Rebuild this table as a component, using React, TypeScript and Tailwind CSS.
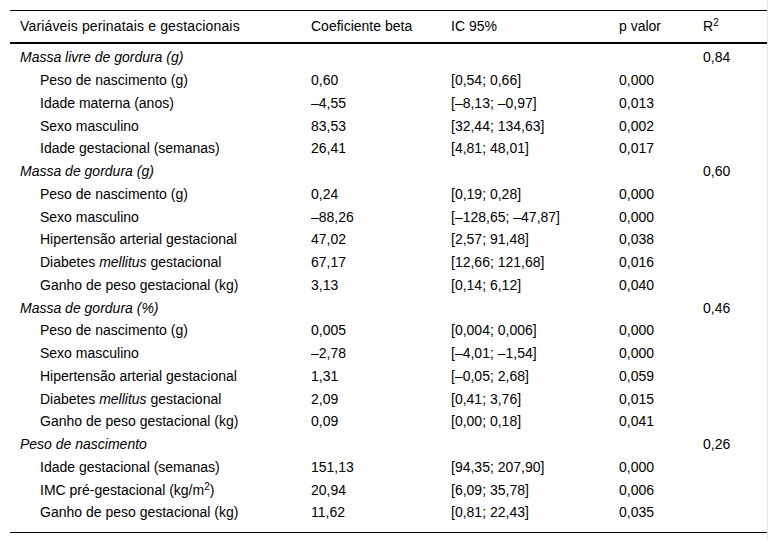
type Row = {
  label: React.ReactNode;
  beta?: string;
  ic?: string;
  p?: string;
  r2?: string;
  group?: boolean;
};

const rows: Row[] = [
  { label: "Massa livre de gordura (g)", group: true, r2: "0,84" },
  { label: "Peso de nascimento (g)", beta: "0,60", ic: "[0,54; 0,66]", p: "0,000" },
  { label: "Idade materna (anos)", beta: "–4,55", ic: "[–8,13; –0,97]", p: "0,013" },
  { label: "Sexo masculino", beta: "83,53", ic: "[32,44; 134,63]", p: "0,002" },
  { label: "Idade gestacional (semanas)", beta: "26,41", ic: "[4,81; 48,01]", p: "0,017" },
  { label: "Massa de gordura (g)", group: true, r2: "0,60" },
  { label: "Peso de nascimento (g)", beta: "0,24", ic: "[0,19; 0,28]", p: "0,000" },
  { label: "Sexo masculino", beta: "–88,26", ic: "[–128,65; –47,87]", p: "0,000" },
  { label: "Hipertensão arterial gestacional", beta: "47,02", ic: "[2,57; 91,48]", p: "0,038" },
  {
    label: (
      <>
        Diabetes <i>mellitus</i> gestacional
      </>
    ),
    beta: "67,17",
    ic: "[12,66; 121,68]",
    p: "0,016",
  },
  { label: "Ganho de peso gestacional (kg)", beta: "3,13", ic: "[0,14; 6,12]", p: "0,040" },
  { label: "Massa de gordura (%)", group: true, r2: "0,46" },
  { label: "Peso de nascimento (g)", beta: "0,005", ic: "[0,004; 0,006]", p: "0,000" },
  { label: "Sexo masculino", beta: "–2,78", ic: "[–4,01; –1,54]", p: "0,000" },
  { label: "Hipertensão arterial gestacional", beta: "1,31", ic: "[–0,05; 2,68]", p: "0,059" },
  {
    label: (
      <>
        Diabetes <i>mellitus</i> gestacional
      </>
    ),
    beta: "2,09",
    ic: "[0,41; 3,76]",
    p: "0,015",
  },
  { label: "Ganho de peso gestacional (kg)", beta: "0,09", ic: "[0,00; 0,18]", p: "0,041" },
  { label: "Peso de nascimento", group: true, r2: "0,26" },
  { label: "Idade gestacional (semanas)", beta: "151,13", ic: "[94,35; 207,90]", p: "0,000" },
  {
    label: (
      <>
        IMC pré-gestacional (kg/m<sup className="text-[10px] leading-none">2</sup>)
      </>
    ),
    beta: "20,94",
    ic: "[6,09; 35,78]",
    p: "0,006",
  },
  { label: "Ganho de peso gestacional (kg)", beta: "11,62", ic: "[0,81; 22,43]", p: "0,035" },
];

const cols = "grid grid-cols-[291px_140px_168px_84px_74px]";

export default function App() {
  return (
    <div className="h-[545px] w-[778px] bg-white">
      <div className="ml-[10px] h-[540px] w-[758px] border-r border-[#e8e8e8] pt-[10px] font-['Liberation_Sans',Arial,sans-serif] text-[14px] text-black">
        <div className="w-[757px] border-t border-b-[1px] border-black pb-[8px]">
          {/* header */}
          <div className={`${cols} h-[33px] items-center border-b-2 border-black`}>
            <div className="pl-[10px] tracking-[0.15px]">Variáveis perinatais e gestacionais</div>
            <div className="pl-[10px]">Coeficiente beta</div>
            <div className="pl-[10px]">IC 95%</div>
            <div className="pl-[10px]">p valor</div>
            <div className="pl-[10px]">
              R<sup className="text-[10px] leading-none">2</sup>
            </div>
          </div>

          <div className="pt-[2px]">
            {rows.map((r, i) => (
              <div key={i} className={`${cols} h-[22.75px] items-center leading-none`}>
                <div className={r.group ? "pl-[10px] italic" : "pl-[30px]"}>{r.label}</div>
                <div className="pl-[10px]">{r.beta}</div>
                <div className="pl-[10px]">{r.ic}</div>
                <div className="pl-[10px]">{r.p}</div>
                <div className="pl-[10px]">{r.r2}</div>
              </div>
            ))}
          </div>
        </div>
      </div>
    </div>
  );
}
